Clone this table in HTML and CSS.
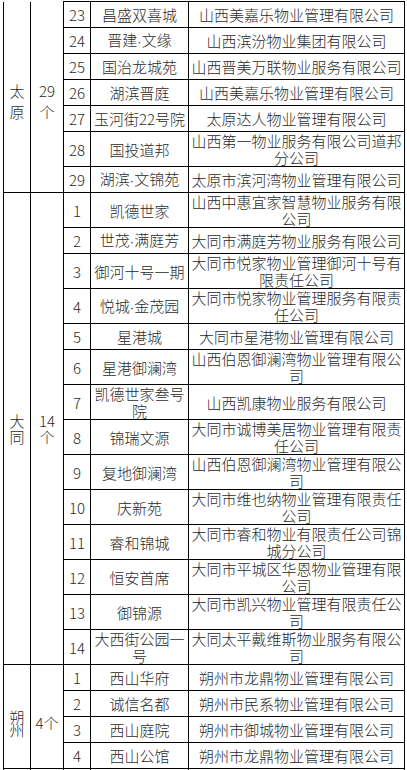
FILE: index.html
```html
<!DOCTYPE html>
<html lang="zh-CN">
<head>
<meta charset="utf-8">
<title>物业项目表</title>
<link rel="stylesheet" href="styles.css">
</head>
<body>
<table class="grid">
  <colgroup>
    <col class="c-region">
    <col class="c-count">
    <col class="c-no">
    <col class="c-name">
    <col class="c-co">
  </colgroup>
  <tbody>
    <tr class="first">
      <td rowspan="7" class="region cut ty">太原</td>
      <td rowspan="7" class="count cut ty">29个</td>
      <td class="no">23</td><td class="name">昌盛双喜城</td><td class="co">山西美嘉乐物业管理有限公司</td>
    </tr>
    <tr><td class="no">24</td><td class="name">晋建<span class="dot">·</span>文缘</td><td class="co">山西滨汾物业集团有限公司</td></tr>
    <tr><td class="no">25</td><td class="name">国治龙城苑</td><td class="co">山西晋美万联物业服务有限公司</td></tr>
    <tr><td class="no">26</td><td class="name">湖滨晋庭</td><td class="co">山西美嘉乐物业管理有限公司</td></tr>
    <tr><td class="no">27</td><td class="name">玉河街22号院</td><td class="co">太原达人物业管理有限公司</td></tr>
    <tr><td class="no">28</td><td class="name">国投道邦</td><td class="co">山西第一物业服务有限公司道邦分公司</td></tr>
    <tr><td class="no">29</td><td class="name">湖滨<span class="dot">·</span>文锦苑</td><td class="co">太原市滨河湾物业管理有限公司</td></tr>

    <tr>
      <td rowspan="14" class="region dt">大同</td>
      <td rowspan="14" class="count dt">14个</td>
      <td class="no">1</td><td class="name">凯德世家</td><td class="co">山西中惠宜家智慧物业服务有限公司</td>
    </tr>
    <tr><td class="no">2</td><td class="name">世茂<span class="dot">·</span>满庭芳</td><td class="co">大同市满庭芳物业服务有限公司</td></tr>
    <tr><td class="no">3</td><td class="name">御河十号一期</td><td class="co">大同市悦家物业管理御河十号有限责任公司</td></tr>
    <tr><td class="no">4</td><td class="name">悦城<span class="dot">·</span>金茂园</td><td class="co">大同市悦家物业管理服务有限责任公司</td></tr>
    <tr><td class="no">5</td><td class="name">星港城</td><td class="co">大同市星港物业管理有限公司</td></tr>
    <tr><td class="no">6</td><td class="name">星港御澜湾</td><td class="co">山西伯恩御澜湾物业管理有限公司</td></tr>
    <tr><td class="no">7</td><td class="name">凯德世家叁号院</td><td class="co">山西凯康物业服务有限公司</td></tr>
    <tr><td class="no">8</td><td class="name">锦瑞文源</td><td class="co">大同市诚博美居物业管理有限责任公司</td></tr>
    <tr><td class="no">9</td><td class="name">复地御澜湾</td><td class="co">山西伯恩御澜湾物业管理有限公司</td></tr>
    <tr><td class="no">10</td><td class="name">庆新苑</td><td class="co">大同市维也纳物业管理有限责任公司</td></tr>
    <tr><td class="no">11</td><td class="name">睿和锦城</td><td class="co">大同市睿和物业有限责任公司锦城分公司</td></tr>
    <tr><td class="no">12</td><td class="name">恒安首席</td><td class="co">大同市平城区华恩物业管理有限公司</td></tr>
    <tr><td class="no">13</td><td class="name">御锦源</td><td class="co">大同市凯兴物业管理有限责任公司</td></tr>
    <tr><td class="no">14</td><td class="name">大西街公园一号</td><td class="co">大同太平戴维斯物业服务有限公司</td></tr>

    <tr>
      <td rowspan="4" class="region sz">朔州</td>
      <td rowspan="4" class="count sz">4个</td>
      <td class="no">1</td><td class="name">西山华府</td><td class="co">朔州市龙鼎物业管理有限公司</td>
    </tr>
    <tr><td class="no">2</td><td class="name">诚信名都</td><td class="co">朔州市民系物业管理有限公司</td></tr>
    <tr><td class="no">3</td><td class="name">西山庭院</td><td class="co">朔州市御城物业管理有限公司</td></tr>
    <tr><td class="no">4</td><td class="name">西山公馆</td><td class="co">朔州市龙鼎物业管理有限公司</td></tr>
    <tr class="next"><td></td><td></td><td></td><td></td><td></td></tr>
  </tbody>
</table>
</body>
</html>
```
FILE: styles.css
```css
html, body {
  margin: 0;
  padding: 0;
  background: #ffffff;
}

body {
  padding: 1px 0 0 3px;
  font-family: "Noto Sans CJK SC", "Microsoft YaHei", sans-serif;
  font-size: 15px;
  font-weight: 300;
  color: #2a2a2a;
}

.grid {
  border-collapse: collapse;
  table-layout: fixed;
  width: 401px;
}

.c-region { width: 27px; }
.c-count { width: 33px; }
.c-no { width: 27px; }
.c-name { width: 98px; }
.c-co { width: 216px; }

.grid tr {
  height: 26px;
}

.grid td {
  border: 1px solid #000000;
  padding: 0;
  line-height: 17px;
  text-align: center;
  vertical-align: middle;
  word-break: break-all;
}

.grid td.count {
  padding: 0 2px;
}

.grid td.cut {
  border-top: none;
}

.grid .dot {
  font-family: "Liberation Sans", sans-serif;
  font-size: 13px;
}

.grid td.ty { line-height: 21px; padding-top: 8px; }
.grid td.dt { line-height: 16px; }
.grid td.sz { line-height: 13px; padding-top: 12px; }

.grid tr.next {
  height: 10px;
}
```
